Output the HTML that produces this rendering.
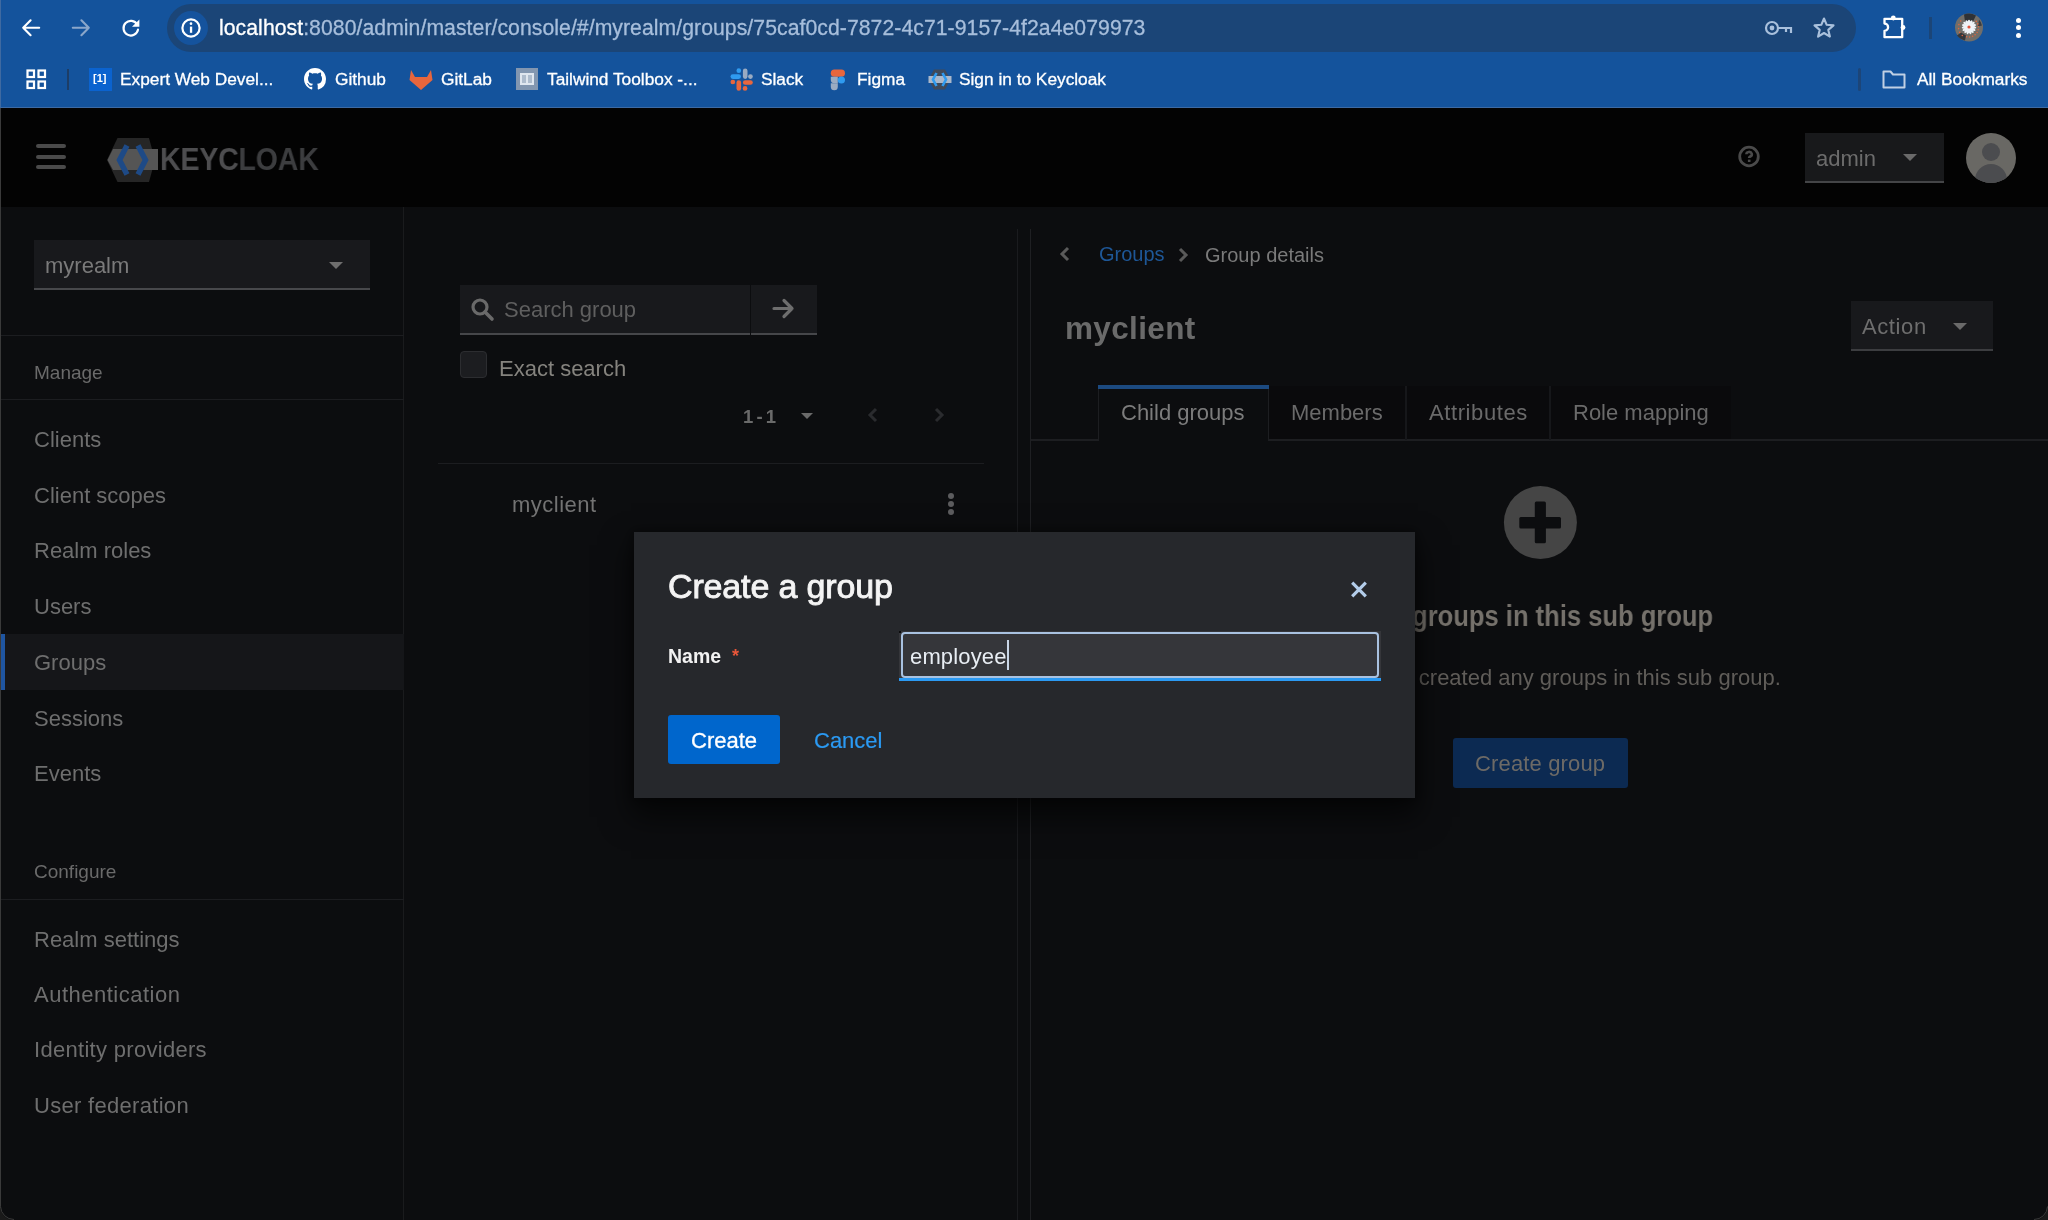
<!DOCTYPE html>
<html><head><meta charset="utf-8">
<style>
*{box-sizing:border-box;margin:0;padding:0}
html,body{width:2048px;height:1220px;overflow:hidden;background:#0c0d0f;font-family:"Liberation Sans",sans-serif}
.a{position:absolute}
.t{position:absolute;white-space:nowrap;line-height:1;will-change:transform}
#chrome{left:0;top:0;width:2048px;height:108px;background:#14539c}
#pill{left:167px;top:4px;width:1689px;height:48px;border-radius:24px;background:#1b4577}
#mast{left:0;top:108px;width:2048px;height:99px;background:#030303}
#side{left:0;top:207px;width:404px;height:1013px;background:#0c0d0f;border-right:1px solid #1a1b1d}
#main{left:404px;top:207px;width:1644px;height:1013px;background:#0c0d0f}
.nav{left:34px;font-size:22px;color:#6e6e6e}
.bm{top:71px;font-size:17.3px;color:#fff;-webkit-text-stroke:0.3px #fff}
.sep{height:1px;background:#1c1d20}
</style></head>
<body>
<!-- Browser chrome -->
<div id="chrome" class="a"></div>
<div id="pill" class="a"></div>
<div class="a" style="left:174px;top:11px;width:34px;height:34px;border-radius:17px;background:#15539d"></div>
<div class="t" style="left:219px;top:17px;font-size:21.2px;letter-spacing:0.06px;color:#fff;-webkit-text-stroke:0.3px currentColor">localhost<span style="color:#a7bedb;-webkit-text-stroke:0.3px #a7bedb">:8080/admin/master/console/#/myrealm/groups/75caf0cd-7872-4c71-9157-4f2a4e079973</span></div>
<div class="a" style="left:0;top:107px;width:2048px;height:1px;background:#3d6aa3"></div>
<!-- nav icons -->
<svg class="a" style="left:18px;top:14px" width="28" height="28" viewBox="0 0 28 28"><path d="M21.2 13.75H5.2M12.6 6.3L5.2 13.75L12.6 21.2" stroke="#fff" stroke-width="2.1" fill="none" stroke-linecap="round" stroke-linejoin="round"/></svg>
<svg class="a" style="left:67px;top:14px" width="28" height="28" viewBox="0 0 28 28"><path d="M5.8 13.75H21.8M14.4 6.3L21.8 13.75L14.4 21.2" stroke="#8ba7ca" stroke-width="2.1" fill="none" stroke-linecap="round" stroke-linejoin="round"/></svg>
<svg class="a" style="left:117px;top:14px" width="28" height="28" viewBox="0 0 28 28"><path d="M20.2 10.6A7.3 7.3 0 1 0 21 15.6" stroke="#fff" stroke-width="2.2" fill="none" stroke-linecap="round"/><path d="M22.4 5.4v7.4h-7.4z" fill="#fff"/></svg>
<svg class="a" style="left:177px;top:14px" width="28" height="28" viewBox="0 0 28 28"><circle cx="14" cy="14" r="8.6" stroke="#fff" stroke-width="2.2" fill="none"/><rect x="12.9" y="12.6" width="2.3" height="6.2" fill="#fff"/><circle cx="14" cy="9.7" r="1.35" fill="#fff"/></svg>
<!-- right icons in pill -->
<svg class="a" style="left:1764px;top:16px" width="30" height="24" viewBox="0 0 30 24"><circle cx="8" cy="12" r="6" stroke="#a9c0dc" stroke-width="2.2" fill="none"/><circle cx="8" cy="12" r="2.4" fill="#a9c0dc"/><path d="M14 12h13v5M22 12v4" stroke="#a9c0dc" stroke-width="2.2" fill="none"/></svg>
<svg class="a" style="left:1810px;top:14px" width="28" height="28" viewBox="0 0 28 28"><path d="M14 4.5l2.7 6.3 6.8.6-5.2 4.5 1.6 6.7L14 19l-5.9 3.6 1.6-6.7-5.2-4.5 6.8-.6z" stroke="#a9c0dc" stroke-width="2.1" fill="none" stroke-linejoin="round"/></svg>
<svg class="a" style="left:1880px;top:13px" width="30" height="28" viewBox="0 0 30 28"><path d="M4.5 5.8H22.2V24.2H4.5V17.8A3.6 3.6 0 0 0 4.5 10.6Z" stroke="#fff" stroke-width="2.3" fill="none" stroke-linejoin="round"/><circle cx="13.3" cy="5" r="2.4" fill="#fff"/><circle cx="23" cy="14.5" r="2.4" fill="#fff"/></svg>
<div class="a" style="left:1929px;top:17px;width:3px;height:22px;background:#1b4577"></div>
<svg class="a" style="left:1955px;top:13px" width="28" height="29" viewBox="0 0 28 28"><circle cx="14" cy="14" r="14" fill="#716e69"/><path d="M9 1a14 14 0 0 1 12 1l-3 6h-8z" fill="#2f3236"/><path d="M2 22a14 14 0 0 0 8 5l1-5-5-3z" fill="#34373b"/><path d="M24 6a14 14 0 0 1 3 6l-4 1z" fill="#3a3d41"/><circle cx="7.3" cy="22.0" r="0.8" fill="#e0663e"/><circle cx="4.7" cy="18.9" r="0.8" fill="#e0663e"/><circle cx="3.6" cy="15.1" r="0.8" fill="#e0663e"/><circle cx="3.9" cy="11.1" r="0.8" fill="#e0663e"/><circle cx="5.7" cy="7.5" r="0.8" fill="#e0663e"/><circle cx="21.3" cy="7.9" r="0.8" fill="#e0663e"/><circle cx="22.8" cy="10.4" r="0.8" fill="#e0663e"/><circle cx="23.5" cy="13.3" r="0.8" fill="#e0663e"/><circle cx="23.2" cy="16.3" r="0.8" fill="#e0663e"/><circle cx="22.1" cy="19.0" r="0.8" fill="#e0663e"/><circle cx="20.1" cy="21.3" r="0.8" fill="#e0663e"/><circle cx="17.6" cy="22.8" r="0.8" fill="#e0663e"/><circle cx="14.7" cy="23.5" r="0.8" fill="#e0663e"/><circle cx="11.7" cy="23.2" r="0.8" fill="#e0663e"/><g><ellipse cx="14" cy="10" rx="1.4" ry="3.8" fill="#eef2f7" transform="rotate(0 14 13.5)"/><ellipse cx="14" cy="10" rx="1.4" ry="3.8" fill="#eef2f7" transform="rotate(24 14 13.5)"/><ellipse cx="14" cy="10" rx="1.4" ry="3.8" fill="#eef2f7" transform="rotate(48 14 13.5)"/><ellipse cx="14" cy="10" rx="1.4" ry="3.8" fill="#eef2f7" transform="rotate(72 14 13.5)"/><ellipse cx="14" cy="10" rx="1.4" ry="3.8" fill="#eef2f7" transform="rotate(96 14 13.5)"/><ellipse cx="14" cy="10" rx="1.4" ry="3.8" fill="#eef2f7" transform="rotate(120 14 13.5)"/><ellipse cx="14" cy="10" rx="1.4" ry="3.8" fill="#eef2f7" transform="rotate(144 14 13.5)"/><ellipse cx="14" cy="10" rx="1.4" ry="3.8" fill="#eef2f7" transform="rotate(168 14 13.5)"/><ellipse cx="14" cy="10" rx="1.4" ry="3.8" fill="#eef2f7" transform="rotate(192 14 13.5)"/><ellipse cx="14" cy="10" rx="1.4" ry="3.8" fill="#eef2f7" transform="rotate(216 14 13.5)"/><ellipse cx="14" cy="10" rx="1.4" ry="3.8" fill="#eef2f7" transform="rotate(240 14 13.5)"/><ellipse cx="14" cy="10" rx="1.4" ry="3.8" fill="#eef2f7" transform="rotate(264 14 13.5)"/><ellipse cx="14" cy="10" rx="1.4" ry="3.8" fill="#eef2f7" transform="rotate(288 14 13.5)"/><ellipse cx="14" cy="10" rx="1.4" ry="3.8" fill="#eef2f7" transform="rotate(312 14 13.5)"/><ellipse cx="14" cy="10" rx="1.4" ry="3.8" fill="#eef2f7" transform="rotate(336 14 13.5)"/></g><circle cx="14" cy="13.5" r="1.6" fill="#e0553e"/></svg>
<div class="a" style="left:2016px;top:18px;width:5px;height:5px;border-radius:3px;background:#fff"></div>
<div class="a" style="left:2016px;top:25px;width:5px;height:5px;border-radius:3px;background:#fff"></div>
<div class="a" style="left:2016px;top:33px;width:5px;height:5px;border-radius:3px;background:#fff"></div>
<!-- bookmarks -->
<svg class="a" style="left:26px;top:69px" width="22" height="21" viewBox="0 0 22 21"><g stroke="#fff" stroke-width="2.2" fill="none"><rect x="1.5" y="1.5" width="6.5" height="6.5"/><rect x="12.5" y="1.5" width="6.5" height="6.5"/><rect x="1.5" y="12.5" width="6.5" height="6.5"/><rect x="12.5" y="12.5" width="6.5" height="6.5"/></g></svg>
<div class="a" style="left:67px;top:69px;width:2px;height:21px;background:#1d3d66"></div>
<div class="a" style="left:89px;top:68px;width:23px;height:23px;background:#0b63cf"></div>
<div class="t" style="left:93px;top:73px;font-size:11px;color:#fff;font-weight:bold">[1]</div>
<div class="t bm" style="left:120px">Expert Web Devel...</div>
<svg class="a" style="left:304px;top:68px" width="22" height="22" viewBox="0 0 16 16"><path fill="#fff" d="M8 0C3.58 0 0 3.58 0 8c0 3.54 2.29 6.53 5.47 7.59.4.07.55-.17.55-.38 0-.19-.01-.82-.01-1.49-2.01.37-2.53-.49-2.69-.94-.09-.23-.48-.94-.82-1.13-.28-.15-.68-.52-.01-.53.63-.01 1.08.58 1.23.82.72 1.21 1.87.87 2.33.66.07-.52.28-.87.51-1.07-1.78-.2-3.64-.89-3.640-3.95 0-.87.31-1.59.82-2.15-.08-.2-.36-1.02.08-2.12 0 0 .67-.21 2.2.82.64-.18 1.32-.27 2-.27.68 0 1.36.09 2 .27 1.53-1.04 2.2-.82 2.200-.82.44 1.1.16 1.92.08 2.12.51.56.82 1.27.82 2.150 0 3.07-1.87 3.75-3.65 3.95.29.25.54.73.54 1.48 0 1.07-.01 1.93-.01 2.2 0 .21.15.46.55.38A8.013 8.013 0 0016 8c0-4.42-3.58-8-8-8z"/></svg>
<div class="t bm" style="left:335px">Github</div>
<svg class="a" style="left:409px;top:68px" width="24" height="23" viewBox="0 0 24 23"><path fill="#e8663d" d="M2 2l4 7h12l4-7 1.5 10L12 22 0.5 12z"/></svg>
<div class="t bm" style="left:441px">GitLab</div>
<div class="a" style="left:516px;top:68px;width:22px;height:22px;background:#8296b0"></div>
<div class="a" style="left:520px;top:73px;width:14px;height:12px;border:2px solid #dfe6ef;background:#aebccd"></div>
<div class="a" style="left:526px;top:74px;width:2px;height:10px;background:#dfe6ef"></div>
<div class="t bm" style="left:547px">Tailwind Toolbox -...</div>
<svg class="a" style="left:730px;top:68px" width="24" height="24" viewBox="0 0 24 24"><g stroke-linecap="round" stroke-width="4.6"><path d="M2.8 8.6h5.9" stroke="#2f9bf0"/><path d="M8.8 2.5v0.3" stroke="#2f9bf0"/><path d="M15.2 2.7v5.9" stroke="#9aabc2"/><path d="M20.4 8.6h0.1" stroke="#9aabc2"/><path d="M2.8 14h0.1" stroke="#e8663d"/><path d="M8.8 14.5v5.9" stroke="#e8663d"/><path d="M15.2 14.5h5.3" stroke="#e8663d"/><path d="M15 20.4h0.1" stroke="#e8663d"/></g></svg>
<div class="t bm" style="left:761px">Slack</div>
<svg class="a" style="left:830px;top:69px" width="16" height="22" viewBox="0 0 16 22"><rect x="0.8" y="0.6" width="14.2" height="7.2" rx="3.6" fill="#e8663d"/><path d="M0.8 7.8h7v6.5H4.3A3.5 3.5 0 0 1 0.8 10.8z" fill="#9aabc2"/><circle cx="11.4" cy="11" r="3.6" fill="#2f9bf0"/><path d="M0.8 14.3h7v3.5A3.5 3.5 0 1 1 0.8 17.8z" fill="#9aabc2"/></svg>
<div class="t bm" style="left:857px">Figma</div>
<svg class="a" style="left:928px;top:69px" width="24" height="21" viewBox="0 0 24 21"><path d="M6 0.5h11l5.5 10-5.5 10H6l-5.5-10z" fill="#3f4a5a"/><rect x="0.5" y="7" width="23" height="7" fill="#aab8ca"/><path d="M8.5 4l-3.5 6.5 3.5 6.5M14.5 4l3.5 6.5-3.5 6.5" stroke="#2f9bf0" stroke-width="2.6" fill="none"/></svg>
<div class="t bm" style="left:959px">Sign in to Keycloak</div>
<div class="a" style="left:1858px;top:68px;width:3px;height:23px;border-radius:1.5px;background:#1c4578"></div>
<svg class="a" style="left:1882px;top:70px" width="24" height="19" viewBox="0 0 24 19"><path d="M1.5 1.5h7l2.5 3h11.5v13h-21z" stroke="#c0d0e4" stroke-width="2" fill="none" stroke-linejoin="round"/></svg>
<div class="t bm" style="left:1917px">All Bookmarks</div>


<!-- Keycloak masthead -->
<div id="mast" class="a"></div>
<!-- hamburger -->
<div class="a" style="left:36px;top:144px;width:30px;height:4px;border-radius:2px;background:#4a4a4a"></div>
<div class="a" style="left:36px;top:155px;width:30px;height:4px;border-radius:2px;background:#4a4a4a"></div>
<div class="a" style="left:36px;top:165px;width:30px;height:4px;border-radius:2px;background:#4a4a4a"></div>
<!-- logo -->
<svg class="a" style="left:106px;top:137px" width="56" height="46" viewBox="0 0 56 46"><path d="M11.5 1H43L49 23L43 45H11.5L1 23z" fill="#262626"/><path d="M1.5 23L7 12h45v21H7z" fill="#555"/><path d="M21 8.5L13.5 23L21 37.5M32 8.5L39.5 23L32 37.5" stroke="#1e4a86" stroke-width="5.5" fill="none"/></svg>
<div class="t" style="left:160px;top:144px;font-size:31px;font-weight:bold;color:#4d4d4f;letter-spacing:-0.2px;transform:scaleX(0.92);transform-origin:0 0">KEYC<span style="color:#3c3d3f">LOAK</span></div>
<!-- help -->
<svg class="a" style="left:1737px;top:145px" width="24" height="24" viewBox="0 0 24 24"><circle cx="12" cy="11.5" r="9.3" stroke="#4a4a4a" stroke-width="2.8" fill="none"/><path d="M9.4 9.3a2.7 2.4 0 1 1 3.8 2.2c-.8.4-1.1.8-1.1 1.6" stroke="#4a4a4a" stroke-width="2.6" fill="none"/><rect x="10.9" y="14.6" width="2.6" height="2.4" fill="#4a4a4a"/></svg>
<div class="a" style="left:1805px;top:133px;width:139px;height:50px;background:#18191b;border-bottom:2px solid #444547"></div>
<div class="t" style="left:1816px;top:148px;font-size:22px;color:#6c6c6c">admin</div>
<svg class="a" style="left:1902px;top:153px" width="16" height="9" viewBox="0 0 16 9"><path d="M1 1h14L8 8z" fill="#6a6a6a"/></svg>
<div class="a" style="left:1966px;top:133px;width:50px;height:50px;border-radius:25px;background:#696864;overflow:hidden">
  <div class="a" style="left:16px;top:10px;width:18px;height:18px;border-radius:9px;background:#4b4c4f"></div>
  <div class="a" style="left:9px;top:31px;width:32px;height:24px;border-radius:16px 16px 0 0;background:#4b4c4f"></div>
</div>


<!-- Sidebar -->
<div id="side" class="a"></div>
<div class="a" style="left:34px;top:240px;width:336px;height:50px;background:#18191c;border-bottom:2px solid #47484b"></div>
<div class="t" style="left:45px;top:255px;font-size:22px;color:#7a7a7a">myrealm</div>

<svg class="a" style="left:328px;top:261px" width="16" height="9" viewBox="0 0 16 9"><path d="M1 1h14L8 8z" fill="#6e6e6e"/></svg>
<div class="a sep" style="left:0;top:335px;width:404px"></div>
<div class="t nav" style="top:363px;font-size:19px;color:#6a6a6a">Manage</div>
<div class="a sep" style="left:0;top:399px;width:404px"></div>
<div class="t nav" style="top:429px">Clients</div>
<div class="t nav" style="top:485px">Client scopes</div>
<div class="t nav" style="top:540px">Realm roles</div>
<div class="t nav" style="top:596px">Users</div>
<div class="a" style="left:0;top:634px;width:404px;height:56px;background:#151619"></div>
<div class="a" style="left:1px;top:634px;width:4px;height:56px;background:#1f55a0"></div>
<div class="t nav" style="top:652px">Groups</div>
<div class="t nav" style="top:708px">Sessions</div>
<div class="t nav" style="top:763px">Events</div>
<div class="t nav" style="top:862px;font-size:19px;color:#6a6a6a">Configure</div>
<div class="a sep" style="left:0;top:899px;width:404px"></div>
<div class="t nav" style="top:929px">Realm settings</div>
<div class="t nav" style="top:984px;letter-spacing:0.5px">Authentication</div>
<div class="t nav" style="top:1039px;letter-spacing:0.3px">Identity providers</div>
<div class="t nav" style="top:1095px;letter-spacing:0.3px">User federation</div>

<!-- Main -->
<div id="main" class="a"></div>
<!-- group tree panel -->
<div class="a" style="left:1017px;top:229px;width:1px;height:991px;background:#1a1b1e"></div>
<div class="a" style="left:1030px;top:229px;width:1px;height:991px;background:#1f2023"></div>
<div class="a" style="left:460px;top:285px;width:290px;height:50px;background:#18191c;border-bottom:2px solid #46474a"></div>
<div class="a" style="left:751px;top:285px;width:66px;height:50px;background:#18191c;border-bottom:2px solid #46474a"></div>
<svg class="a" style="left:470px;top:297px" width="25" height="25" viewBox="0 0 25 25"><circle cx="10" cy="10" r="7" stroke="#6a6a6a" stroke-width="3.2" fill="none"/><path d="M15 15l7 7" stroke="#6a6a6a" stroke-width="3.6" stroke-linecap="round"/></svg>
<div class="t" style="left:504px;top:299px;font-size:22px;color:#5f5f5f">Search group</div>
<svg class="a" style="left:772px;top:297px" width="24" height="23" viewBox="0 0 24 23"><path d="M2 11.5h18M12 3.5l8 8-8 8" stroke="#6e6e6e" stroke-width="3.2" fill="none" stroke-linecap="round" stroke-linejoin="round"/></svg>
<div class="a" style="left:460px;top:351px;width:27px;height:27px;border-radius:4px;background:#1c1d20;border:1px solid #2c2d30"></div>
<div class="t" style="left:499px;top:358px;font-size:22px;color:#85837e">Exact search</div>
<div class="t" style="left:743px;top:407.5px;font-size:18.5px;font-weight:bold;color:#6a6a6a;word-spacing:-2px">1 - 1</div>
<svg class="a" style="left:800px;top:412px" width="14" height="8" viewBox="0 0 14 8"><path d="M1 1h12L7 7z" fill="#6a6a6a"/></svg>
<svg class="a" style="left:866px;top:406px" width="14" height="18" viewBox="0 0 14 18"><path d="M10 3L4 9l6 6" stroke="#2a2b2e" stroke-width="3" fill="none"/></svg>
<svg class="a" style="left:932px;top:406px" width="14" height="18" viewBox="0 0 14 18"><path d="M4 3l6 6-6 6" stroke="#2a2b2e" stroke-width="3" fill="none"/></svg>
<div class="a" style="left:438px;top:463px;width:546px;height:1px;background:#1c1d20"></div>
<div class="t" style="left:512px;top:494px;font-size:22px;color:#737373;letter-spacing:0.5px">myclient</div>
<div class="a" style="left:947.5px;top:492.8px;width:6.4px;height:6.4px;border-radius:50%;background:#5c5c5e"></div>
<div class="a" style="left:947.5px;top:500.8px;width:6.4px;height:6.4px;border-radius:50%;background:#5c5c5e"></div>
<div class="a" style="left:947.5px;top:508.6px;width:6.4px;height:6.4px;border-radius:50%;background:#5c5c5e"></div>

<!-- right panel -->
<svg class="a" style="left:1058px;top:245px" width="14" height="18" viewBox="0 0 14 18"><path d="M10 3L4 9l6 6" stroke="#5a5a5a" stroke-width="3" fill="none"/></svg>
<div class="t" style="left:1099px;top:244px;font-size:20px;color:#1e5797">Groups</div>
<svg class="a" style="left:1176px;top:246px" width="14" height="18" viewBox="0 0 14 18"><path d="M4 3l6 6-6 6" stroke="#5a5a5a" stroke-width="3" fill="none"/></svg>
<div class="t" style="left:1205px;top:245px;font-size:20px;color:#7a7a7a">Group details</div>
<div class="t" style="left:1065px;top:312.5px;font-size:31.5px;font-weight:bold;color:#6a6a6a;letter-spacing:0.35px">myclient</div>
<div class="a" style="left:1851px;top:301px;width:142px;height:50px;background:#18191c;border-bottom:2px solid #3c3d40"></div>
<div class="t" style="left:1862px;top:316px;font-size:22px;color:#6e6e6e;letter-spacing:0.6px">Action</div>
<svg class="a" style="left:1952px;top:322px" width="16" height="9" viewBox="0 0 16 9"><path d="M1 1h14L8 8z" fill="#6a6a6a"/></svg>
<!-- tabs -->
<div class="a" style="left:1031px;top:439px;width:1017px;height:2px;background:#1d1e21"></div>
<div class="a" style="left:1269px;top:386px;width:462px;height:54px;background:#0a0a0c;border-bottom:1px solid #1d1e21"></div>
<div class="a" style="left:1405px;top:386px;width:2px;height:54px;background:#16171a"></div>
<div class="a" style="left:1549px;top:386px;width:2px;height:54px;background:#16171a"></div>
<div class="a" style="left:1098px;top:386px;width:171px;height:55px;background:#0c0d0f;border-left:1px solid #1d1e21;border-right:1px solid #1d1e21"></div>
<div class="a" style="left:1098px;top:385px;width:171px;height:4px;background:#1c4a80"></div>
<div class="t" style="left:1121px;top:401.5px;font-size:22px;color:#7c7c7c">Child groups</div>
<div class="t" style="left:1291px;top:401.5px;font-size:22px;color:#6a6a6a">Members</div>
<div class="t" style="left:1429px;top:401.5px;font-size:22px;color:#6a6a6a;letter-spacing:0.6px">Attributes</div>
<div class="t" style="left:1573px;top:401.5px;font-size:22px;color:#6a6a6a">Role mapping</div>
<!-- empty state -->
<svg class="a" style="left:1503px;top:485px" width="75" height="75" viewBox="0 0 75 75"><circle cx="37.4" cy="37.6" r="36.5" fill="#454545"/><rect x="31.8" y="16.6" width="11.1" height="41.7" rx="1.5" fill="#0c0d0f"/><rect x="16.3" y="32" width="41.7" height="11.5" rx="1.5" fill="#0c0d0f"/></svg>
<div class="t" style="left:1542px;top:601px;width:0;font-size:30px;font-weight:bold;color:#75716b"><span style="position:absolute;transform:translateX(-50%) scaleX(0.852)">No groups in this sub group</span></div>
<div class="t" style="left:1540px;top:666.5px;width:0;font-size:22px;color:#605d59"><span style="position:absolute;transform:translateX(-50%)">You haven't created any groups in this sub group.</span></div>
<div class="a" style="left:1453px;top:738px;width:175px;height:50px;border-radius:3px;background:#0c2a52"></div>
<div class="t" style="left:1475px;top:752.5px;font-size:22px;color:#6d6a66;letter-spacing:0.15px">Create group</div>



<!-- modal -->
<div class="a" style="left:634px;top:532px;width:781px;height:266px;background:#26282c;box-shadow:0 16px 28px 3px rgba(0,0,0,.6),0 0 10px 2px rgba(0,0,0,.35)"></div>
<div class="t" style="left:668px;top:568.5px;font-size:34px;color:#f4f4f4;letter-spacing:-0.15px;-webkit-text-stroke:0.9px #f4f4f4">Create a group</div>
<svg class="a" style="left:1350px;top:580px" width="18" height="19" viewBox="0 0 18 19"><path d="M2.2 2.7l13.6 13.6M15.8 2.7L2.2 16.3" stroke="#b3cdea" stroke-width="3.2"/></svg>
<div class="t" style="left:668px;top:647px;font-size:19.5px;font-weight:bold;color:#f2f2f2">Name</div>
<div class="t" style="left:732px;top:647px;font-size:18px;font-weight:bold;color:#e8573a">*</div>
<div class="a" style="left:899px;top:631px;width:482px;height:50px;background:#35363a;border-bottom:3px solid #2b9af3"></div>
<div class="a" style="left:899px;top:631px;width:2px;height:2px;background:#0b0b0c"></div>
<div class="a" style="left:901px;top:632px;width:478px;height:46px;border:2px solid #a9c2e0;border-radius:4px"></div>
<div class="t" style="left:910px;top:646px;font-size:22px;color:#e8edf3;letter-spacing:0.15px">employee</div>
<div class="a" style="left:1007px;top:640px;width:2px;height:30px;background:#c9d6e6"></div>
<div class="a" style="left:668px;top:715px;width:112px;height:49px;border-radius:3px;background:#0066cc"></div>
<div class="t" style="left:691px;top:729.5px;font-size:22px;color:#fff;-webkit-text-stroke:0.3px #fff">Create</div>
<div class="t" style="left:814px;top:729.5px;font-size:22px;color:#2b9af3;-webkit-text-stroke:0.2px #2b9af3">Cancel</div>

<!-- window edges -->
<div class="a" style="left:0;top:0;width:1px;height:107px;background:#3f6aa1"></div>
<div class="a" style="left:0;top:108px;width:1px;height:1100px;background:#3a3a3a"></div>
<svg class="a" style="left:0;top:1206px" width="14" height="14" viewBox="0 0 14 14"><path d="M0 0v14h14A13 13 0 0 1 0.5 0.5z" fill="#1a1a1a"/><path d="M0.5 0.5A13.5 13.5 0 0 0 14 13.5" stroke="#3a3a3a" stroke-width="1" fill="none"/></svg>
<svg class="a" style="left:2034px;top:1206px" width="14" height="14" viewBox="0 0 14 14"><path d="M14 0v14H0A13 13 0 0 0 13.5 0.5z" fill="#1a1a1a"/><path d="M13.5 0.5A13.5 13.5 0 0 1 0 13.5" stroke="#3a3a3a" stroke-width="1" fill="none"/></svg>
</body></html>
